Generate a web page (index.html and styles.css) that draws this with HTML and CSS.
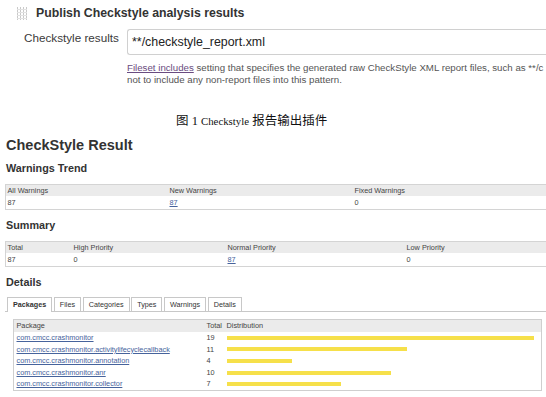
FILE: index.html
```html
<!DOCTYPE html>
<html>
<head>
<meta charset="utf-8">
<link rel="stylesheet" href="styles.css">
</head>
<body>
<section class="publish">
  <div class="sect-head">
    <svg class="grip" width="10" height="13" viewBox="0 0 10 13">
      <g fill="#c9c9c9">
        <rect x="0" y="0" width="1" height="13"/>
        <rect x="3" y="0" width="1" height="13"/>
        <rect x="6" y="0" width="1" height="13"/>
        <rect x="9" y="0" width="1" height="13"/>
      </g>
      <g fill="#e2e2e2">
        <rect x="0" y="2" width="10" height="1"/>
        <rect x="0" y="5" width="10" height="1"/>
        <rect x="0" y="8" width="10" height="1"/>
        <rect x="0" y="11" width="10" height="1"/>
      </g>
    </svg>
    <span class="sect-title">Publish Checkstyle analysis results</span>
  </div>
  <div class="field">
    <label class="field-label">Checkstyle results</label>
    <div class="field-main">
      <div class="input">**/checkstyle_report.xml</div>
      <div class="help"><a class="help-link" href="#">Fileset includes</a> setting that specifies the generated raw CheckStyle XML report files, such as **/c<br>not to include any non-report files into this pattern.</div>
    </div>
  </div>
</section>

<p class="caption">图 1 <span class="lat">Checkstyle</span> 报告输出插件</p>

<section class="result">
  <h1 class="title">CheckStyle Result</h1>

  <h2 class="sub">Warnings Trend</h2>
  <table class="data">
    <colgroup><col class="t1c1"><col class="t1c2"><col></colgroup>
    <tr><th>All Warnings</th><th>New Warnings</th><th>Fixed Warnings</th></tr>
    <tr><td>87</td><td><a class="lnk" href="#">87</a></td><td>0</td></tr>
  </table>

  <h2 class="sub">Summary</h2>
  <table class="data">
    <colgroup><col class="t2c1"><col class="t2c2"><col class="t2c3"><col></colgroup>
    <tr><th>Total</th><th>High Priority</th><th>Normal Priority</th><th>Low Priority</th></tr>
    <tr><td>87</td><td>0</td><td><a class="lnk" href="#">87</a></td><td>0</td></tr>
  </table>

  <h2 class="sub">Details</h2>
  <div class="tabs">
    <span class="tab active">Packages</span>
    <span class="tab">Files</span>
    <span class="tab">Categories</span>
    <span class="tab">Types</span>
    <span class="tab">Warnings</span>
    <span class="tab">Details</span>
  </div>

  <table class="pkg">
    <colgroup><col class="p1"><col class="p2"><col></colgroup>
    <tr><th>Package</th><th>Total</th><th>Distribution</th></tr>
    <tr><td><a class="lnk" href="#">com.cmcc.crashmonitor</a></td><td>19</td><td><div class="bar" style="width:307px"></div></td></tr>
    <tr><td><a class="lnk" href="#">com.cmcc.crashmonitor.activitylifecyclecallback</a></td><td>11</td><td><div class="bar" style="width:180px"></div></td></tr>
    <tr><td><a class="lnk" href="#">com.cmcc.crashmonitor.annotation</a></td><td>4</td><td><div class="bar" style="width:65px"></div></td></tr>
    <tr><td><a class="lnk" href="#">com.cmcc.crashmonitor.anr</a></td><td>10</td><td><div class="bar" style="width:164px"></div></td></tr>
    <tr><td><a class="lnk" href="#">com.cmcc.crashmonitor.collector</a></td><td>7</td><td><div class="bar" style="width:114px"></div></td></tr>
  </table>
</section>
</body>
</html>
```

FILE: styles.css
```css
html, body {
  margin: 0;
  padding: 0;
  overflow: hidden;
}
body {
  width: 546px;
  height: 397px;
  background: #fff;
  font-family: "Liberation Sans", Arial, sans-serif;
  color: #333;
}

/* publish block */
.publish {
  padding-top: 6px;
}
.sect-head {
  display: flex;
  align-items: center;
  height: 14px;
  padding-left: 17px;
  gap: 9px;
}
.grip {
  display: block;
  flex: none;
}
.sect-title {
  font-weight: bold;
  font-size: 12.3px;
  line-height: 14px;
  color: #333;
  white-space: nowrap;
}
.field {
  display: flex;
  margin-top: 9px;
}
.field-label {
  flex: none;
  width: 103px;
  padding-left: 24px;
  padding-top: 1.5px;
  font-size: 11.7px;
  line-height: 14px;
  color: #3a3a3a;
  white-space: nowrap;
}
.field-main {
  flex: none;
  width: 600px;
}
.input {
  box-sizing: border-box;
  width: 100%;
  height: 26px;
  border: 1px solid #d0d0d0;
  border-right: none;
  border-radius: 3px 0 0 3px;
  padding: 1px 4px 0;
  font-size: 12.4px;
  line-height: 23px;
  color: #222;
  white-space: nowrap;
}
.help {
  margin-top: 7px;
  font-size: 9.7px;
  line-height: 12px;
  color: #555;
  white-space: nowrap;
}
.help-link {
  color: #6a4c80;
}

/* caption */
.caption {
  margin: 27px 0 0;
  padding-left: 176px;
  font-family: "Liberation Serif", "Noto Sans CJK SC", serif;
  font-size: 12.5px;
  line-height: 16px;
  color: #111;
}
.caption .lat {
  font-size: 10.8px;
}

/* result */
.result {
  padding-left: 5px;
}
.title {
  margin: 8px 0 0 1px;
  font-size: 14.5px;
  line-height: 17px;
  font-weight: bold;
  color: #333;
}
.sub {
  margin: 7.5px 0 0 1px;
  font-size: 10.8px;
  line-height: 13px;
  font-weight: bold;
  color: #333;
}
.data + .sub {
  margin-top: 8.5px;
}
.data {
  margin-top: 9.5px;
  width: 560px;
  table-layout: fixed;
  border: 1px solid #d4d4d4;
  border-spacing: 0;
  font-size: 7.3px;
  color: #444;
}
.data th {
  background: #ebebeb;
  font-weight: normal;
  text-align: left;
  padding: 0 1.5px;
  line-height: 11px;
  white-space: nowrap;
}
.data td {
  padding: 0 1.5px;
  line-height: 13px;
  white-space: nowrap;
}
.t1c1 { width: 162px; }
.t1c2 { width: 185px; }
.t2c1 { width: 66px; }
.t2c2 { width: 154px; }
.t2c3 { width: 179px; }

.lnk {
  color: #46639c;
  text-decoration: underline;
}

/* tabs */
.tabs {
  display: flex;
  align-items: flex-end;
  gap: 1.7px;
  height: 14px;
  margin-top: 8.5px;
  padding-left: 2px;
  border-bottom: 1px solid #c8c8c8;
}
.tab {
  border: 1px solid #c8c8c8;
  border-bottom: none;
  padding: 0 5px;
  font-size: 7.2px;
  line-height: 13px;
  color: #333;
  background: #fff;
  white-space: nowrap;
}
.tab.active {
  font-weight: bold;
  padding-bottom: 1px;
  margin-bottom: -1px;
}

/* packages table */
.pkg {
  margin: 7px 0 0 8px;
  width: 529px;
  table-layout: fixed;
  border: 1px solid #cfcfcf;
  border-spacing: 0;
  font-size: 7.3px;
  color: #444;
}
.pkg th {
  background: #ebebeb;
  font-weight: normal;
  text-align: left;
  padding: 0 2.5px;
  line-height: 12px;
  white-space: nowrap;
}
.pkg td {
  padding: 0 2.5px;
  height: 11.6px;
  line-height: 11.6px;
  white-space: nowrap;
  vertical-align: middle;
}
.p1 { width: 190px; }
.p2 { width: 20px; }
.bar {
  height: 4px;
  background: #f6e04a;
}
```
